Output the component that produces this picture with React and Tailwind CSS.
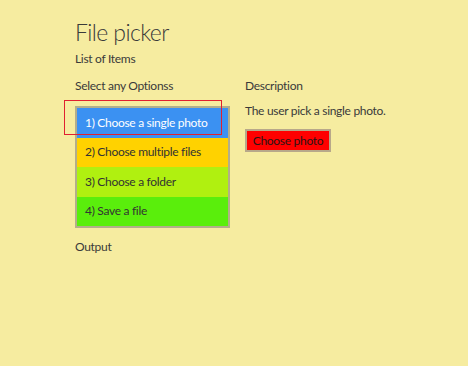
import React from 'react';

const options = [
  { label: '1) Choose a single photo', bg: 'bg-[#3b91f2]', text: 'text-white' },
  { label: '2) Choose multiple files', bg: 'bg-[#ffd200]', text: 'text-[#333]' },
  { label: '3) Choose a folder', bg: 'bg-[#b0f010]', text: 'text-[#333]' },
  { label: '4) Save a file', bg: 'bg-[#5aee0c]', text: 'text-[#333]' },
];

const App = () => {
  return (
    <div
      className="w-[468px] h-[366px] bg-[#f6eca0] text-[#3a3a3a] pl-[75px] pt-[16px] overflow-hidden text-[12px] tracking-[-0.3px]"
      style={{ fontFamily: 'Lato, "Open Sans", sans-serif' }}
    >
      <h1 className="text-[23px] font-light leading-[32px] tracking-[-0.6px]">File picker</h1>
      <p className="leading-[16px] mt-[3px]">List of Items</p>

      <div className="flex mt-[11px]">
        <div className="w-[170px]">
          <p className="leading-[16px]">Select any Optionss</p>
          <div className="relative mt-[12px] w-[155px] border-2 border-[#b3ae8a]">
            {options.map((opt) => (
              <div
                key={opt.label}
                className={`h-[29.5px] flex items-center pl-[8px] ${opt.bg} ${opt.text}`}
              >
                {opt.label}
              </div>
            ))}
            <div className="absolute left-[-13px] top-[-8px] w-[158px] h-[35px] border border-[#e02030]" />
          </div>
          <p className="leading-[16px] mt-[11px]">Output</p>
        </div>

        <div>
          <p className="leading-[16px]">Description</p>
          <p className="leading-[16px] mt-[9px]">The user pick a single photo.</p>
          <button className="mt-[10px] w-[86px] h-[23px] bg-[#ff0000] border-2 border-[#b8a88a] text-[#2a1515] flex items-center justify-center">
            Choose photo
          </button>
        </div>
      </div>
    </div>
  );
};

export default App;
